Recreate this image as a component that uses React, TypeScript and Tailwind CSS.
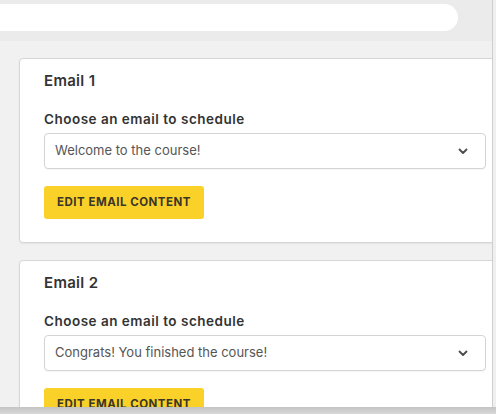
import React from "react";

function Chevron() {
  return (
    <svg width="10" height="7" viewBox="0 0 10 7" className="shrink-0">
      <path d="M1.5 1.5 L5 5 L8.5 1.5" fill="none" stroke="#4a4a4a" strokeWidth="1.8" strokeLinecap="round" strokeLinejoin="round" />
    </svg>
  );
}

function EmailCard({ n, value }: { n: number; value: string }) {
  return (
    <div className="bg-white border border-[#d6d6d6] rounded-[4px] shadow-[0_1px_2px_rgba(0,0,0,0.06)] pl-[24px] pr-[6px] pt-[12px] pb-[23px] w-[480px] shrink-0">
      <div className="text-[15px] leading-[20px] font-semibold text-[#333] tracking-[0.3px]">Email {n}</div>
      <div className="mt-[19px] text-[13.5px] leading-[18px] font-semibold text-[#333] tracking-[0.5px]">Choose an email to schedule</div>
      <div className="mt-[5px] w-[442px] h-[36px] border border-[#d4d4d4] rounded-[4px] bg-white flex items-center justify-between pl-[10px] pr-[17px] shadow-[0_1px_1px_rgba(0,0,0,0.04)]">
        <span className="text-[13px] text-[#555]">{value}</span>
        <Chevron />
      </div>
      <button className="mt-[17px] h-[33px] w-[160px] rounded-[3px] bg-[#f9d129] text-[11.5px] font-bold text-[#3a3628] tracking-[0.5px] flex items-center justify-center">
        EDIT EMAIL CONTENT
      </button>
    </div>
  );
}

export default function App() {
  return (
    <div className="w-[496px] h-[414px] overflow-hidden relative bg-[#efefef]" style={{ fontFamily: "Inter, 'Liberation Sans', sans-serif" }}>
      <div className="w-[493px] h-full border-r border-[#cfcfcf] bg-[#f1f1f1] flex flex-col overflow-hidden">
        <div className="h-[41px] shrink-0 bg-[#ebebeb] pt-[4px]">
          <div className="h-[27px] w-[470px] -ml-[12px] bg-white rounded-full" />
        </div>
        <div className="pl-[19px] pt-[17px] flex flex-col gap-[17px]">
          <EmailCard n={1} value="Welcome to the course!" />
          <EmailCard n={2} value="Congrats! You finished the course!" />
        </div>
      </div>
      <div className="absolute left-0 right-0 bottom-0 h-[7px] bg-gradient-to-b from-[#c4c4c4] to-[#d8d8d8]" />
    </div>
  );
}
